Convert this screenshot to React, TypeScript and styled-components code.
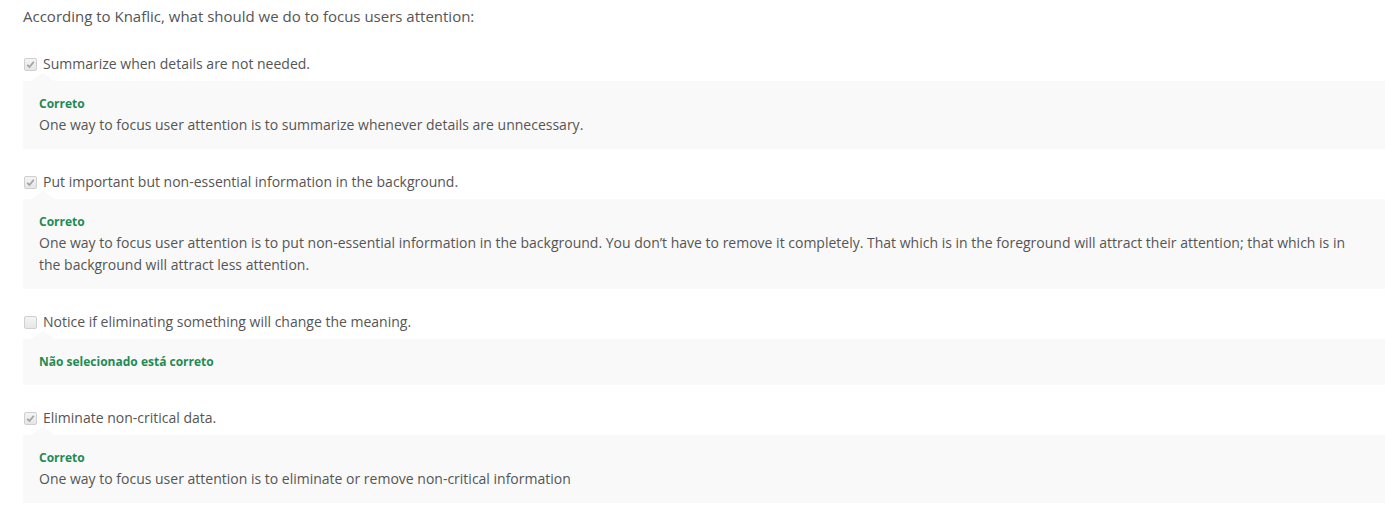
import React from "react";
import styled, { createGlobalStyle } from "styled-components";

const Global = createGlobalStyle`
  html, body { margin: 0; padding: 0; background: #fff; }
  body { font-family: "Open Sans", "Liberation Sans", sans-serif; }
`;

const Page = styled.div`
  padding: 5px 0 0 23px;
  color: #555;
  font-size: 14px;
`;

const Question = styled.div`
  font-size: 15px;
  line-height: 22px;
  margin-bottom: 26px;
`;

const Item = styled.div`
  margin-bottom: 22px;
`;

const OptionRow = styled.label`
  display: flex;
  align-items: center;
  height: 22px;
  line-height: 22px;
  gap: 6px;
  margin-bottom: 6px;
  color: #555;
`;

const Box = styled.span`
  width: 11px;
  height: 11px;
  margin-left: 1px;
  border: 1px solid #cfcfcf;
  border-radius: 2px;
  background: linear-gradient(#f4f4f4, #e6e6e6);
  display: flex;
  align-items: center;
  justify-content: center;
  flex: none;
`;

const Feedback = styled.div`
  position: relative;
  background: #f9f9f9;
  padding: 13px 16px 13px;
  &::before {
    content: "";
    position: absolute;
    left: 8px;
    top: -8px;
    border-left: 12px solid transparent;
    border-right: 12px solid transparent;
    border-bottom: 8px solid #f9f9f9;
  }
`;

const Verdict = styled.div`
  color: #228b55;
  font-weight: 700;
  font-size: 12px;
  line-height: 20px;
`;

const Explanation = styled.div`
  line-height: 22px;
  color: #555;
`;

const Check = () => (
  <svg width="9" height="9" viewBox="0 0 9 9">
    <path d="M1.2 4.8 L3.5 7 L7.8 1.8" fill="none" stroke="#a3a3a3" strokeWidth="1.8" />
  </svg>
);

type Opt = { label: string; checked: boolean; verdict: string; text?: string };

const options: Opt[] = [
  {
    label: "Summarize when details are not needed.",
    checked: true,
    verdict: "Correto",
    text: "One way to focus user attention is to summarize whenever details are unnecessary.",
  },
  {
    label: "Put important but non-essential information in the background.",
    checked: true,
    verdict: "Correto",
    text: "One way to focus user attention is to put non-essential information in the background. You don\u2019t have to remove it completely. That which is in the foreground will attract their attention; that which is in the background will attract less attention.",
  },
  {
    label: "Notice if eliminating something will change the meaning.",
    checked: false,
    verdict: "N\u00e3o selecionado est\u00e1 correto",
  },
  {
    label: "Eliminate non-critical data.",
    checked: true,
    verdict: "Correto",
    text: "One way to focus user attention is to eliminate or remove non-critical information",
  },
];

export default function App() {
  return (
    <>
      <Global />
      <Page>
        <Question>According to Knaflic, what should we do to focus users attention:</Question>
        {options.map((o) => (
          <Item key={o.label}>
            <OptionRow>
              <Box>{o.checked && <Check />}</Box>
              {o.label}
            </OptionRow>
            <Feedback>
              <Verdict>{o.verdict}</Verdict>
              {o.text && <Explanation>{o.text}</Explanation>}
            </Feedback>
          </Item>
        ))}
      </Page>
    </>
  );
}
